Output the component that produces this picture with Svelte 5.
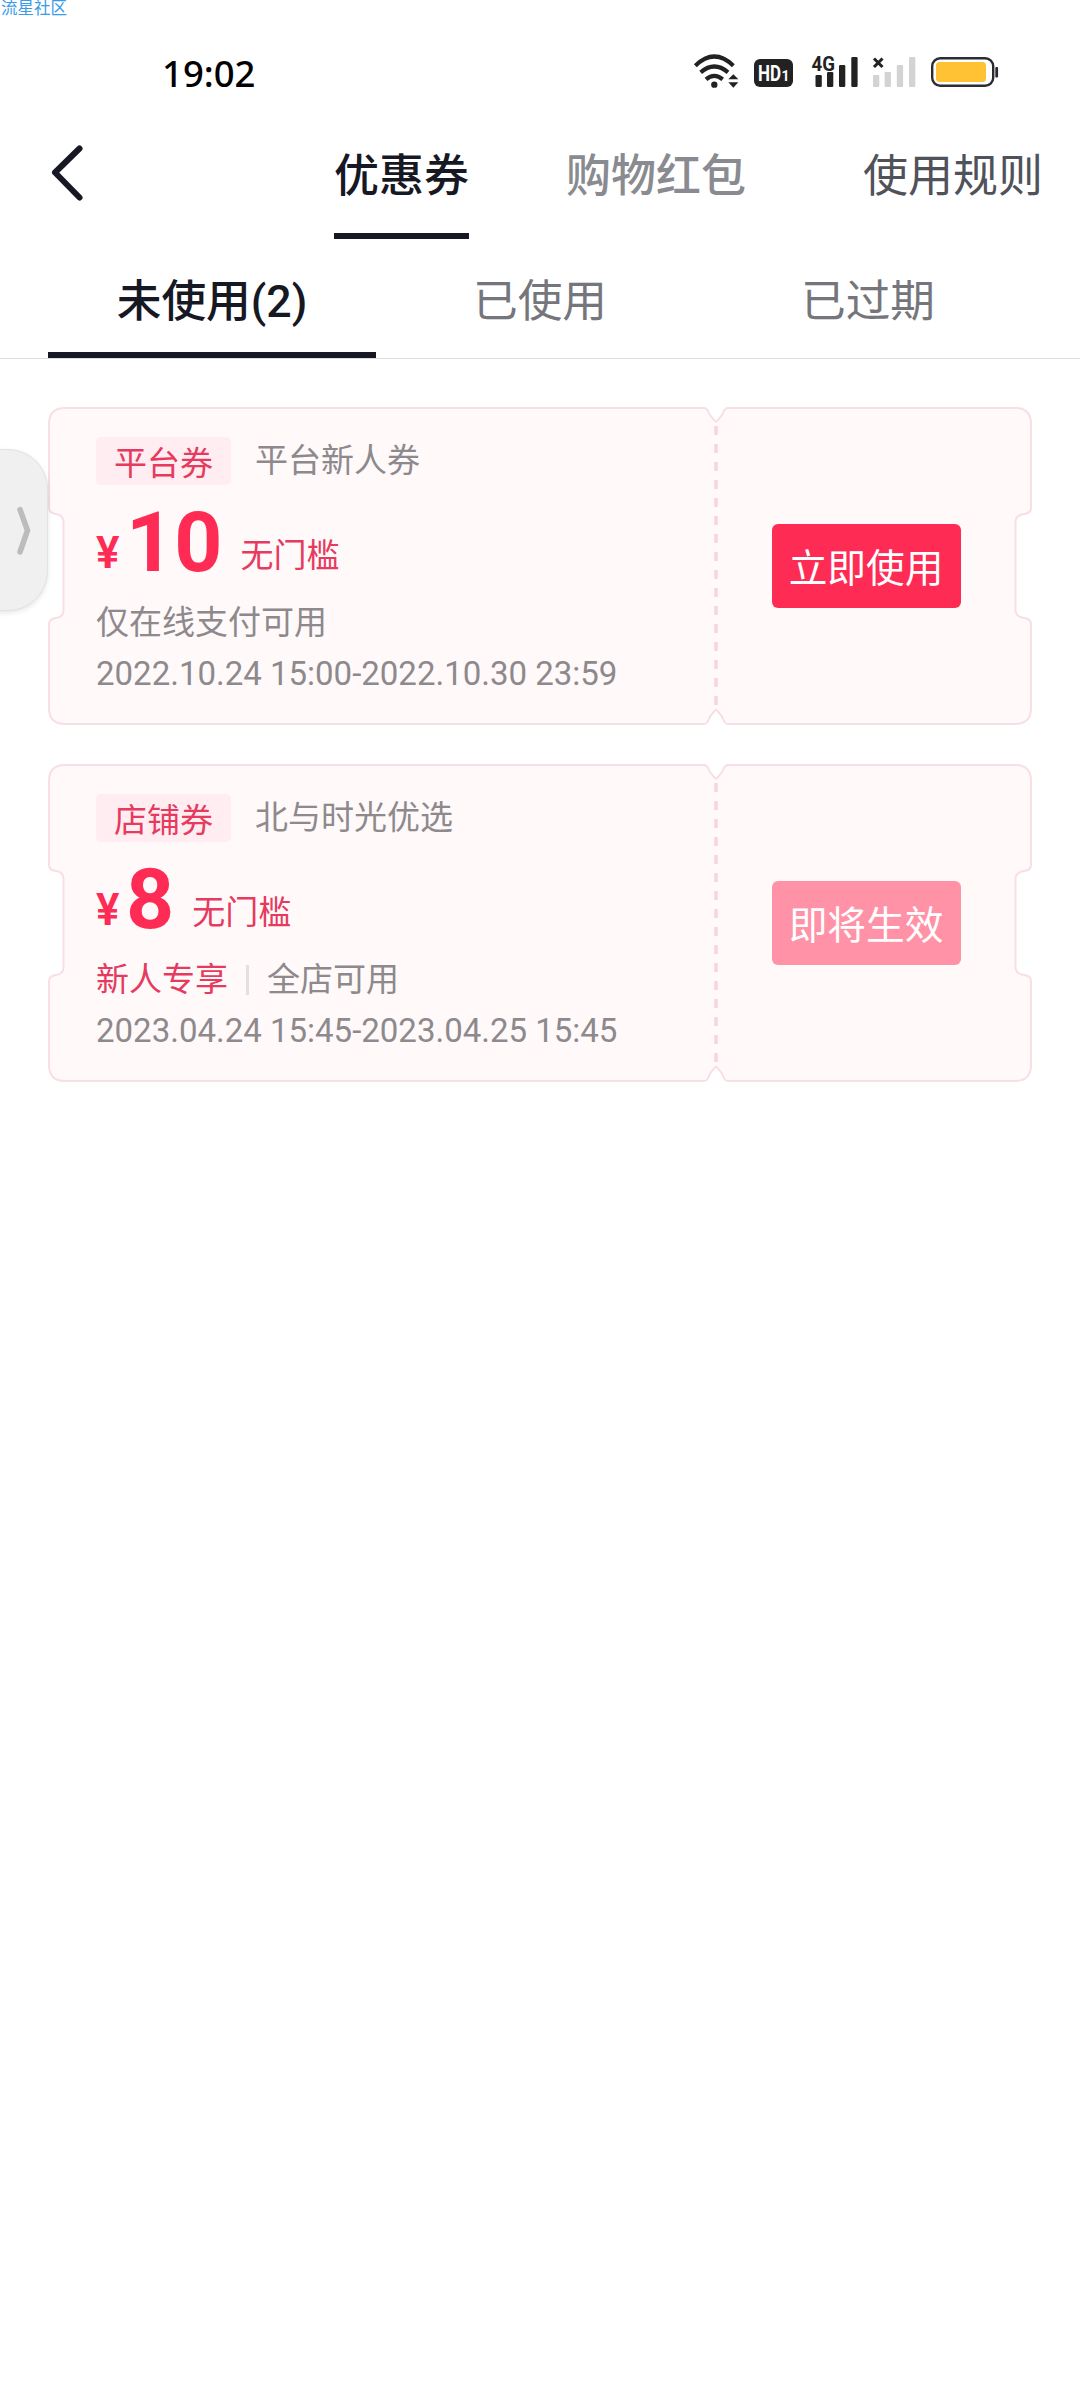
<script>
  let mainTabs = ["优惠券", "购物红包"];
  let activeMain = 0;

  let statusTabs = ["未使用(2)", "已使用", "已过期"];
  let activeStatus = 0;

  let coupons = [
    {
      tag: "平台券",
      title: "平台新人券",
      amount: "10",
      limit: "无门槛",
      special: "",
      scope: "仅在线支付可用",
      time: "2022.10.24 15:00-2022.10.30 23:59",
      action: "立即使用",
      enabled: true,
    },
    {
      tag: "店铺券",
      title: "北与时光优选",
      amount: "8",
      limit: "无门槛",
      special: "新人专享",
      scope: "全店可用",
      time: "2023.04.24 15:45-2023.04.25 15:45",
      action: "即将生效",
      enabled: false,
    },
  ];

  // ticket outline, 984 x 318
  const ticket =
    "M17 1 H656 Q659 1 660.5 5 Q662 9 664 10.5 L667 14 Q668 15.4 669 14 L672 10.5 Q674 9 675.5 5 Q677 1 680 1 " +
    "H967 Q983 1 983 17 V101 Q983 106 976.5 107 Q967.5 108 967.5 115 V203 Q967.5 210 976.5 211 Q983 212 983 217 V301 " +
    "Q983 317 967 317 H680 Q677 317 675.5 313 Q674 309 672 307 L669 303.5 Q668 302 667 303.5 L664 307 Q662 309 660.5 313 Q659 317 656 317 " +
    "H17 Q1 317 1 301 V217 Q1 212 8 211 Q15.5 210 15.5 203 V115 Q15.5 108 8 107 Q1 106 1 101 V17 Q1 1 17 1 Z";
</script>

<div class="page">
  <span class="watermark">流星社区</span>

  <div class="status-bar">
    <span class="clock">19:02</span>
    <div class="status-icons">
      <svg class="wifi" width="45" height="34" viewBox="0 0 135 102">
        <g fill="none" stroke="#222" stroke-width="12.5">
          <path d="M4 35 Q61 -20 118 35" />
          <path d="M20 55 Q61 20 102 55" />
          <path d="M36 76 Q61 55 86 76" />
        </g>
        <circle cx="61" cy="92" r="9.5" fill="#222" />
        <path d="M118 61 L133 76 H103 Z M103 85 H133 L118 101 Z" fill="#222" />
      </svg>
      <svg class="hd" width="39" height="28" viewBox="0 0 39 28">
        <rect width="39" height="28" rx="6" fill="#222" />
        <text x="4" y="22" font-size="21.5" textLength="23" lengthAdjust="spacingAndGlyphs">HD</text>
        <text x="27.5" y="22" font-size="14">1</text>
      </svg>
      <svg class="signal" width="46" height="33" viewBox="0 0 46 33">
        <g fill="#222">
          <rect x="3.5" y="20" width="6.3" height="12" rx="1.2" />
          <rect x="15" y="17" width="6.3" height="15" rx="1.2" />
          <rect x="27" y="10" width="6.3" height="22" rx="1.2" />
          <rect x="39.3" y="2" width="6.3" height="30" rx="1.2" />
          <text x="-0.5" y="15.5" font-size="21" textLength="23.5" lengthAdjust="spacingAndGlyphs">4G</text>
        </g>
      </svg>
      <svg class="no-signal" width="43" height="33" viewBox="0 0 43 33">
        <g fill="#d3d3d3">
          <rect x="0" y="20" width="6.3" height="12" rx="1.2" />
          <rect x="11.6" y="17" width="6.3" height="15" rx="1.2" />
          <rect x="23.8" y="10" width="6.3" height="22" rx="1.2" />
          <rect x="36" y="2" width="6.3" height="30" rx="1.2" />
        </g>
        <path d="M1 3.5 L9.5 12 M9.5 3.5 L1 12" stroke="#222" stroke-width="3" />
      </svg>
      <svg class="battery" width="68" height="30" viewBox="0 0 68 30">
        <rect x="1.2" y="1.2" width="61" height="27.6" rx="8" fill="#fff" stroke="#2b2b33" stroke-width="2.4" />
        <rect x="5" y="5" width="50" height="20" rx="3.5" fill="#fec234" />
        <rect x="64.3" y="10" width="2.8" height="10.5" rx="1" fill="#2b2b33" />
      </svg>
    </div>
  </div>

  <header class="header">
    <svg class="back" width="34" height="58" viewBox="0 0 34 58">
      <path d="M29.5 4.5 L5 28.5 L29.5 53.5" />
    </svg>
    <nav class="main-tabs">
      {#each mainTabs as tab, index}
        <span
          class={index === activeMain ? "active" : "normal"}
          on:click={() => (activeMain = index)}>{tab}</span
        >
      {/each}
    </nav>
    <span class="rules">使用规则</span>
  </header>

  <nav class="status-tabs">
    {#each statusTabs as tab, index}
      <span
        class={index === activeStatus ? "active" : "normal"}
        on:click={() => (activeStatus = index)}>{tab}</span
      >
    {/each}
  </nav>

  <ul class="coupons">
    {#each coupons as item}
      <li>
        <svg class="ticket" width="984" height="318" viewBox="0 0 984 318">
          <path d={ticket} fill="#fff9f9" stroke="#f7dfe4" stroke-width="2" />
          <path
            d="M668 19 V300"
            stroke="#f8d5dd"
            stroke-width="3.5"
            stroke-dasharray="9 9"
          />
        </svg>
        <div class="info">
          <div class="heading">
            <span class="tag">{item.tag}</span>
            <span class="title">{item.title}</span>
          </div>
          <div class="price">
            <span class="yen">¥</span>
            <span class="amount">{item.amount}</span>
            <span class="limit">{item.limit}</span>
          </div>
          <div class="scope">
            {#if item.special}
              <span class="special">{item.special}</span>
            {/if}
            <span>{item.scope}</span>
          </div>
          <div class="time">{item.time}</div>
        </div>
        <div class="action">
          <button class:pending={!item.enabled}>{item.action}</button>
        </div>
      </li>
    {/each}
  </ul>

  <div class="drawer">
    <svg width="14" height="50" viewBox="0 0 14 50">
      <path d="M3 3.5 L10.5 24.5 L3 46" />
    </svg>
  </div>
</div>

<style>
  :global(body) {
    background: #fff;
  }
  .page {
    position: relative;
    width: 1080px;
    height: 2400px;
    overflow: hidden;
    background: #fff;
    color: #161823;
    font-family: Roboto, "Noto Sans CJK SC", sans-serif;
  }
  .watermark {
    position: absolute;
    top: 0;
    left: 1px;
    font-size: 16.5px;
    line-height: 18px;
    font-weight: 400;
    color: #3a9be8;
  }

  .status-bar {
    display: flex;
    justify-content: space-between;
    align-items: center;
    box-sizing: border-box;
    height: 113px;
    padding: 30px 81px 0 162px;
  }
  .clock {
    padding-top: 2px;
    font-family: "Noto Sans", sans-serif;
    font-size: 36.5px;
    line-height: 40px;
    font-weight: 500;
    color: #000;
  }
  .status-icons {
    display: flex;
    align-items: flex-end;
    height: 33px;
  }
  .status-icons svg {
    display: block;
    overflow: visible;
  }
  .status-icons text {
    font-family: Roboto, sans-serif;
    font-weight: 700;
  }
  .wifi {
    margin-right: 15px;
  }
  .hd {
    margin-right: 19px;
    margin-bottom: 1px;
  }
  .hd text {
    fill: #fff;
  }
  .signal {
    margin-right: 15px;
  }
  .no-signal {
    margin-right: 15px;
  }
  .battery {
    margin-bottom: 1px;
  }

  .header {
    display: flex;
    box-sizing: border-box;
    height: 126px;
    padding: 0 37px 0 50px;
    font-size: 45px;
    line-height: 127px;
  }
  .back {
    margin-top: 31px;
    margin-right: 250px;
  }
  .back path,
  .drawer path {
    fill: none;
    stroke-linecap: round;
    stroke-linejoin: round;
  }
  .back path {
    stroke: #161823;
    stroke-width: 6;
  }
  .main-tabs {
    display: flex;
    flex: 1;
    gap: 97px;
    font-weight: 500;
  }
  .main-tabs span {
    box-sizing: border-box;
    height: 126px;
  }
  .main-tabs .normal {
    color: #8a8b91;
  }
  .main-tabs .active {
    border-bottom: 6px solid #161823;
  }
  .rules {
    color: #50525a;
  }

  .status-tabs {
    display: flex;
    height: 119px;
    padding: 0 48px;
    border-bottom: 1px solid #dcdcde;
    font-size: 44.7px;
    line-height: 126px;
    text-align: center;
  }
  .status-tabs span {
    flex: 1;
    box-sizing: border-box;
  }
  .status-tabs .normal {
    color: #75767c;
  }
  .status-tabs .active {
    height: 119px;
    font-weight: 500;
    border-bottom: 6px solid #161823;
  }

  .coupons {
    display: flex;
    flex-direction: column;
    gap: 39px;
    margin: 0;
    padding: 48px 48px 0;
    list-style: none;
  }
  .coupons li {
    position: relative;
    display: flex;
    height: 318px;
  }
  .ticket {
    position: absolute;
    top: 0;
    left: 0;
  }
  .info,
  .action {
    position: relative;
  }
  .info {
    box-sizing: border-box;
    width: 668px;
    padding: 30px 0 0 48px;
    font-size: 33px;
    color: #8d898d;
  }
  .heading {
    display: flex;
    height: 48px;
  }
  .tag {
    box-sizing: border-box;
    width: 135px;
    margin-right: 24px;
    border-radius: 5px;
    background: #ffedf1;
    color: #e63a5f;
    line-height: 53px;
    text-align: center;
  }
  .title {
    line-height: 48px;
  }
  .price {
    display: flex;
    align-items: flex-end;
    height: 84px;
    margin-top: 16px;
    color: #fe2c55;
  }
  .yen {
    width: 30px;
    margin-bottom: 9px;
    font-size: 44px;
    line-height: 45px;
    font-weight: 600;
  }
  .amount {
    font-size: 84px;
    line-height: 84px;
    font-weight: 700;
  }
  .limit {
    margin-left: 18px;
    margin-bottom: 13px;
    line-height: 33px;
    color: #e63a5f;
  }
  .scope {
    display: flex;
    align-items: center;
    margin-top: 14px;
    line-height: 48px;
  }
  .special {
    display: flex;
    align-items: center;
    color: #e63a5f;
  }
  .special::after {
    content: "";
    width: 3px;
    height: 30px;
    margin: 0 18px;
    background: #e4e0e2;
  }
  .time {
    margin-top: 3px;
    line-height: 48px;
    white-space: nowrap;
  }
  .action {
    display: flex;
    flex: 1;
    align-items: center;
    padding-left: 56px;
  }
  button {
    width: 189px;
    height: 84px;
    padding: 5px 1px 0 0;
    border: none;
    border-radius: 6px;
    background: #fe2c55;
    color: #fff;
    font-family: inherit;
    font-size: 38.7px;
    line-height: 79px;
  }
  button.pending {
    background: #ff92a6;
  }

  /* edge handle, sits over the first coupon */
  .drawer {
    position: absolute;
    top: 449px;
    left: -2px;
    display: flex;
    align-items: center;
    box-sizing: border-box;
    width: 50px;
    height: 162px;
    padding-left: 18px;
    padding-top: 2px;
    border: 1px solid #e2e2e2;
    border-radius: 0 40px 40px 0;
    background: #f0f0f0;
    box-shadow: 0 2px 5px rgba(0, 0, 0, 0.1);
  }
  .drawer path {
    stroke: #bcbcbc;
    stroke-width: 5.5;
  }
</style>
